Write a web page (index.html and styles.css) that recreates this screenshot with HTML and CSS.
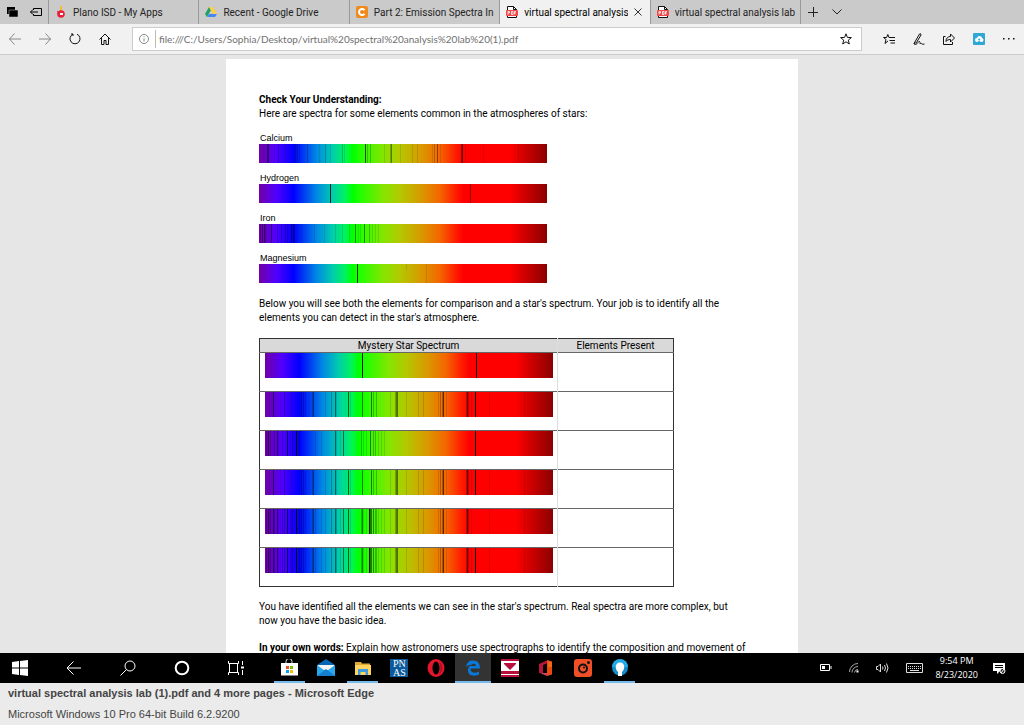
FILE: index.html
```html
<!DOCTYPE html>
<html lang="en">
<head>
<meta charset="utf-8">
<title>virtual spectral analysis lab (1).pdf</title>
<link rel="stylesheet" href="styles.css">
</head>
<body>
<svg class="defs" aria-hidden="true">
  <defs>
    <linearGradient id="rainbow">
      <stop offset="0" stop-color="#7200a4"/><stop offset=".06" stop-color="#5000ff"/><stop offset=".12" stop-color="#0000ff"/>
      <stop offset=".2" stop-color="#0088e4"/><stop offset=".255" stop-color="#00ccae"/><stop offset=".3" stop-color="#00f45c"/>
      <stop offset=".325" stop-color="#00ff00"/><stop offset=".35" stop-color="#20ff00"/><stop offset=".43" stop-color="#84e600"/>
      <stop offset=".49" stop-color="#b4c800"/><stop offset=".57" stop-color="#dc9400"/><stop offset=".63" stop-color="#f46400"/>
      <stop offset=".68" stop-color="#ff2000"/><stop offset=".71" stop-color="#f00"/><stop offset=".87" stop-color="#f00"/>
      <stop offset=".94" stop-color="#c00000"/><stop offset="1" stop-color="#8c0000"/>
    </linearGradient>
    <g id="base"><rect width="288" height="25" fill="url(#rainbow)"/></g>
    <g id="calcium">
      <path class="faint" d="M4.5 0V25M15.5 0V25M26.5 0V25M40.5 0V25M60.5 0V25M71.5 0V25M85.5 0V25M125.5 0V25M141.5 0V25M153.5 0V25M158.5 0V25M173.5 0V25M181.5 0V25M206.5 0V25M224.5 0V25M259.5 0V25"/>
      <path class="soft" d="M19.5 0V25M36.5 0V25M38.5 0V25M48.5 0V25M66.5 0V25M83.5 0V25M108.5 0V25M111.5 0V25M131.5 0V25M175.5 0V25M203.5 0V25"/>
      <path class="mid" d="M8.5 0V25M106.5 0V25M132.5 0V25M178.5 0V25M202.5 0V25"/>
    </g>
    <g id="iron">
      <path class="faint" d="M13.5 0V25M25.5 0V25M50.5 0V25M56.5 0V25M71.5 0V25M75.5 0V25M98.5 0V25M101.5 0V25M113.5 0V25M116.5 0V25M119.5 0V25"/>
      <path class="soft" d="M1.5 0V25M5.5 0V25M9.5 0V25M17.5 0V25M22.5 0V25M27.5 0V25M34.5 0V25M96.5 0V25M108.5 0V25M110.5 0V25"/>
      <path class="mid" d="M3.5 0V25M12.5 0V25M22.5 0V25M78.5 0V25M105.5 0V25"/>
      <path class="dark" d="M31.5 0V25"/>
    </g>
    <g id="mixed">
      <use href="#calcium"/>
      <path class="mid" d="M70.5 0V25M83.5 0V25M97.5 0V25"/>
      <path class="broad" d="M131 0V25M178 0V25M202 0V25M48 0V25"/>
    </g>
    <symbol id="pdf" viewBox="0 0 12 12"><path d="M1.5 11.5V.5h6l3 3v8z" fill="#fff" stroke="#111"/><path d="M7.5.5v3h3" fill="none" stroke="#111"/><rect y="4" width="12" height="6" rx="1" fill="#f04848"/><path d="M2 8.500v-3h1.500v1.500H2M5.500 5.500v3H7v-3zM10 5.500H8.500v3M8.500 7H10" fill="none" stroke="#fff" stroke-width=".8"/></symbol>
  </defs>
</svg>

<header class="tabbar">
  <div class="tab-tools">
    <button aria-label="Tabs set aside"><svg width="12" height="12" viewBox="0 0 12 12"><path d="M1 1h8v7H1z"/><path d="M3 4h9v7H3z" stroke="#cacaca" stroke-width=".5"/></svg></button>
    <button aria-label="Set tabs aside"><svg width="12" height="12" viewBox="0 0 12 12" fill="none" stroke="#000"><path d="M3.500 4V2.500h8v7h-8V8M.500 6H8M3 3.500L.500 6 3 8.500"/></svg></button>
  </div>
  <nav class="tabs">
    <button class="tab"><svg viewBox="0 0 12 12"><path d="M5 0h2v5H5z" fill="#f4bd32"/><circle cx="6" cy="8" r="3.800" fill="#e8203c"/><path d="M2 5l3 1-2 2z" fill="#e8203c"/><path d="M5 7h3v2H5z" fill="#fff"/></svg><span>Plano ISD - My Apps</span></button>
    <button class="tab"><svg viewBox="0 0 12 12"><path d="M4 1L0 8l2 3 4-7z" fill="#1ea362"/><path d="M4 1h4l4 7H8z" fill="#ffcf48"/><path d="M4 8h8l-2 3H2z" fill="#4688f1"/></svg><span>Recent - Google Drive</span></button>
    <button class="tab"><svg viewBox="0 0 12 12"><rect width="12" height="12" rx="2" fill="#f08a1c"/><path d="M8.500 4.300A3 3 0 1 0 8.500 7.700" fill="none" stroke="#fff" stroke-width="2"/></svg><span>Part 2: Emission Spectra In T</span></button>
    <button class="tab active"><svg><use href="#pdf"/></svg><span>virtual spectral analysis</span><svg class="close" viewBox="0 0 8 8"><path d="M.5.5l7 7M7.500.5l-7 7" stroke="#333"/></svg></button>
    <button class="tab"><svg><use href="#pdf"/></svg><span>virtual spectral analysis lab (</span></button>
  </nav>
  <button class="tab-extra" aria-label="New tab"><svg width="10" height="10"><path d="M5.500 0v10M0 5.500h10" stroke="#222"/></svg></button>
  <button class="tab-extra" aria-label="Tab previews"><svg width="10" height="6"><path d="M.5.5L5 5 9.500.5" fill="none" stroke="#222"/></svg></button>
</header>

<div class="toolbar">
  <button aria-label="Back" class="dim"><svg width="12" height="12"><path d="M0 6h12M5.500.5L.5 6l5 5.500"/></svg></button>
  <button aria-label="Forward" class="dim"><svg width="12" height="12"><path d="M0 6h12M6.500.5l5 5.500-5 5.500"/></svg></button>
  <button aria-label="Refresh"><svg width="12" height="12"><path d="M4 1.200A5 5 0 1 0 8 1.200M4 3V1H2"/></svg></button>
  <button aria-label="Home"><svg width="12" height="12"><path d="M.5 6.500L6 1l5.500 5.500M2.500 5v6.500h2.500V7.500h2v4h2.500V5"/></svg></button>
  <div class="address">
    <svg class="info" width="10" height="10"><circle cx="5" cy="5" r="4.500"/><path d="M5 4.500v3M5 2.500v1"/></svg>
    <input aria-label="Address" value="file:///C:/Users/Sophia/Desktop/virtual%20spectral%20analysis%20lab%20(1).pdf">
    <button aria-label="Add to favorites"><svg width="12" height="12"><path d="M6 .8l1.400 3.600 4 .2-3.100 2.500 1 3.900L6 8.800 2.700 11l1-3.900L.6 4.600l4-.2z"/></svg></button>
  </div>
  <div class="actions">
    <button aria-label="Hub"><svg width="12" height="12"><path d="M7 4.500H6L4.800 1.500 3.600 4.500H.5L3 6.500 2 10.500 5 8M6.500 4.500H12M6.500 7.500H12M7.500 10H12"/></svg></button>
    <button aria-label="Add notes"><svg width="12" height="12"><path d="M1 10.500L6.500 1q1.500-1 1.500 1L3.500 9.500 1 10.500q0 1 1.500 1C5 11 5 8 6.500 8.500S6 11 7.500 10.500s1 1.500 4 .5"/></svg></button>
    <button aria-label="Share"><svg width="12" height="12"><path d="M2.500 3.500h-2v8h9V9M3 8.500C3 5 5 3.500 7.500 3.500v-2.500l4 4-4 4V6.500C5.500 6.500 4 7 3 8.500z"/></svg></button>
    <button aria-label="Cloud extension"><svg class="solid" width="12" height="12"><rect width="12" height="12" rx="1" fill="#2fa8d5"/><circle cx="4" cy="7" r="2" fill="#fff"/><circle cx="6.500" cy="5.500" r="2.500" fill="#fff"/><circle cx="8.500" cy="7" r="2" fill="#fff"/><circle cx="6.200" cy="6.500" r="1" fill="#2fa8d5"/></svg></button>
    <button aria-label="More"><svg class="solid" width="12" height="4"><path d="M0 1h1.500v1.500H0zM5 1h1.500v1.500H5zM10 1h1.500v1.500H10z" fill="#111"/></svg></button>
  </div>
</div>

<main class="viewer">
  <article class="page">
    <h1>Check Your Understanding:</h1>
    <p>Here are spectra for some elements common in the atmospheres of stars:</p>
    <div class="elements">
      <figure><figcaption>Calcium</figcaption><svg class="spectrum" viewBox="0 0 288 25" preserveAspectRatio="none"><use href="#base"/><use href="#calcium"/><path class="mid" d="M9.500 0V25M106.500 0V25M203.500 0V25"/></svg></figure>
      <figure><figcaption>Hydrogen</figcaption><svg class="spectrum" viewBox="0 0 288 25" preserveAspectRatio="none"><use href="#base"/><path class="dark" d="M71.500 0V25"/><path class="mid" d="M211.500 0V25"/></svg></figure>
      <figure><figcaption>Iron</figcaption><svg class="spectrum" viewBox="0 0 288 25" preserveAspectRatio="none"><use href="#base"/><path class="faint" d="M38.500 0V25M42.500 0V25M55.500 0V25M65.500 0V25M76.500 0V25M83.500 0V25M90.500 0V25M99.500 0V25M101.500 0V25M113.500 0V25M116.500 0V25M119.500 0V25"/><path class="soft" d="M1.500 0V25M6.500 0V25M18.500 0V25M22.500 0V25M26.500 0V25M28.500 0V25M35.500 0V25M110.500 0V25"/><path class="mid" d="M3.500 0V25M5.500 0V25M12.500 0V25M32.500 0V25M34.500 0V25M96.500 0V25M105.500 0V25"/></svg></figure>
      <figure><figcaption>Magnesium</figcaption><svg class="spectrum" viewBox="0 0 288 25" preserveAspectRatio="none"><use href="#base"/><path class="dark" d="M98.500 0V25"/><path class="faint" d="M147.500 0V8M167.500 0V25"/></svg></figure>
    </div>
    <p>Below you will see both the elements for comparison and a star's spectrum. Your job is to identify all the elements you can detect in the star's atmosphere.</p>
    <table>
      <thead><tr><th class="star" scope="col">Mystery Star Spectrum</th><th scope="col">Elements Present</th></tr></thead>
      <tbody>
        <tr><td><svg class="spectrum" viewBox="0 0 288 25" preserveAspectRatio="none"><use href="#base"/><path class="dark" d="M97.500 0V25M211.500 0V25"/></svg></td><td></td></tr>
        <tr><td><svg class="spectrum" viewBox="0 0 288 25" preserveAspectRatio="none"><use href="#base"/><use href="#mixed"/><path class="dark" d="M210.500 0V25"/></svg></td><td></td></tr>
        <tr><td><svg class="spectrum" viewBox="0 0 288 25" preserveAspectRatio="none"><use href="#base"/><use href="#iron"/><path class="mid" d="M70.500 0V25"/><path class="dark" d="M210.500 0V25"/></svg></td><td></td></tr>
        <tr><td><svg class="spectrum" viewBox="0 0 288 25" preserveAspectRatio="none"><use href="#base"/><use href="#mixed"/><path class="dark" d="M210.500 0V25"/></svg></td><td></td></tr>
        <tr><td><svg class="spectrum" viewBox="0 0 288 25" preserveAspectRatio="none"><use href="#base"/><use href="#mixed"/><use href="#iron"/><path class="dark" d="M104.500 0V25"/></svg></td><td></td></tr>
        <tr><td><svg class="spectrum" viewBox="0 0 288 25" preserveAspectRatio="none"><use href="#base"/><use href="#mixed"/><use href="#iron"/><path class="dark" d="M104.500 0V25M210.500 0V25"/></svg></td><td></td></tr>
      </tbody>
    </table>
    <p>You have identified all the elements we can see in the star's spectrum. Real spectra are more complex, but now you have the basic idea.</p>
    <p class="prompt"><b>In your own words:</b> Explain how astronomers use spectrographs to identify the composition and movement of</p>
  </article>
</main>

<div class="taskbar">
  <div class="system">
    <button aria-label="Start"><svg width="16" height="16" fill="#fff"><path d="M0 2l7-1v6.500H0zM8 1l8-1v7.500H8zM0 8.500h7V15l-7-1zM8 8.500h8V16l-8-1z"/></svg></button>
    <button aria-label="Back"><svg width="16" height="14" fill="none" stroke="#fff"><path d="M1 7h14M7.500 .5L1 7l6.500 6.500"/></svg></button>
    <button aria-label="Search"><svg width="16" height="16" fill="none" stroke="#fff"><circle cx="10" cy="6" r="5"/><path d="M6.500 9.500L.5 15.500"/></svg></button>
    <button aria-label="Cortana"><svg width="16" height="16" fill="none" stroke="#fff" stroke-width="2"><circle cx="8" cy="8" r="6.300"/></svg></button>
    <button aria-label="Task view"><svg width="16" height="16" fill="none" stroke="#fff"><path d="M.5 1v2.500h10V1M.5 15v-2.500h10V15M1.500 4v8M9.500 4v8M14.500 1v4M14.500 10v5"/><path d="M13 7.500h3" stroke-width="2"/></svg></button>
  </div>
  <div class="apps">
    <button class="running" aria-label="Store"><svg width="18" height="18"><path d="M6 5V2.500a3 3 0 0 1 6 0V5" fill="none" stroke="#ddd"/><path d="M1 4h17v12.500H1z" fill="#fff"/><path d="M6 7h3v3H6z" fill="#f04f23"/><path d="M10 7h3v3h-3z" fill="#7db900"/><path d="M6 11h3v3H6z" fill="#00a3ee"/><path d="M10 11h3v3h-3z" fill="#ffb800"/></svg></button>
    <button aria-label="Mail"><svg width="18" height="18"><path d="M0 6l9-6 9 6v11H0z" fill="#0866b7"/><path d="M1 6h16v5H1z" fill="#f5f5f5"/><path d="M0 6l9 6.500L18 6v11H0z" fill="#28a8ea"/><path d="M0 17l9-7 9 7z" fill="#1580d0"/></svg></button>
    <button class="running" aria-label="File Explorer"><svg width="18" height="16"><path d="M1 2h6l1 1.500h8V15H1z" fill="#dfa831"/><path d="M1 5h16v10H1z" fill="#ffd35c"/><path d="M4 9h10v6h-2.500v-3h-5v3H4z" fill="#3f9ae0"/></svg></button>
    <button aria-label="PNAS" class="pnas"><span>PN<br>AS</span></button>
    <button aria-label="Opera"><svg width="18" height="18"><path fill-rule="evenodd" d="M9 0a8.500 9 0 1 0 0 18A8.500 9 0 1 0 9 0zM9 2.500c2 0 3.500 3 3.500 6.500S11 15.500 9 15.500 5.500 12.500 5.500 9 7 2.500 9 2.500z" fill="#e5152b"/><path d="M12 2.500c2 4 2 9 0 13 4-2 5-10 0-13z" fill="#a80f20"/></svg></button>
    <button class="running current" aria-label="Microsoft Edge"><svg width="16" height="18"><path d="M1 8C2 2.500 5 1.500 8 1.500c5 0 7 3.500 7 8H5.500c0 5 5 5 8.500 3v3c-4 2-11 2-11-4.500C3 8.500 4.500 6.500 7 5.500 4.500 5.500 2.500 6.500 1 8zm4.600-1H11c0-3-5-3-5.400 0z" fill="#0a78d7"/></svg></button>
    <button aria-label="Reader"><svg width="18" height="18"><path d="M0 0h18v18H0z" fill="#fff"/><path d="M0 0h18v2H0zM3 4h12v1l-6 6-6-6zM0 12h18v3H0zM0 16h18v2H0z" fill="#b8103c"/></svg></button>
    <button aria-label="Office"><svg width="14" height="18"><path d="M0 5l9-4v3L4 6v8H0z" fill="#b6163c"/><path d="M8 1l5 1.500v13L8 17z" fill="#e84a10"/><path d="M1 14h7v3z" fill="#d44068"/><path d="M9 2l4 1v5H9z" fill="#f06a14"/></svg></button>
    <button aria-label="Camera"><svg width="18" height="18"><rect width="18" height="18" rx="3" fill="#f05028"/><circle cx="9" cy="9.500" r="4" fill="none" stroke="#111" stroke-width="2"/><circle cx="14.500" cy="3.500" r="1.500" fill="#111"/><circle cx="10" cy="8.500" r="1" fill="#111"/></svg></button>
    <button class="running" aria-label="Tips"><svg width="18" height="18"><circle cx="9" cy="8.500" r="8" fill="#148cc8"/><path d="M1 8a8 8 0 0 1 16 0z" fill="#24aae4"/><path d="M7 17v-4C3.500 10 4 3.500 9 3.500s5.500 6.500 2 9.500v4z" fill="#fff"/></svg></button>
  </div>
  <div class="tray">
    <div class="status">
      <svg width="12" height="8"><path d="M.5.5h9v6h-9zM11 2v3" fill="none" stroke="#fff"/><path d="M2 2h3v3H2z" fill="#fff"/></svg>
      <svg width="10" height="10" fill="none" stroke="#aaa"><path d="M.5 9A8.500 8.500 0 0 1 9 .5M3 9.500A6 6 0 0 1 9 3.500M5.500 9.500A3.500 3.500 0 0 1 9 6.500"/><path d="M7.500 8.500h2" stroke="#fff" stroke-width="2"/></svg>
      <svg width="13" height="10" fill="none" stroke="#ddd"><path d="M.5 3.500H2L4.500 1v8L2 6.500H.5zM6.500 3.500q1 1.500 0 3M8.500 2q2 3 0 6M10.500.5q3 4.500 0 9"/></svg>
      <svg width="17" height="11" fill="none" stroke="#ddd"><path d="M.5.5h16v9H.5z"/><path d="M2 3.500h13M2 5.500h13" stroke-dasharray="1 1"/><path d="M4 7.500h9"/></svg>
    </div>
    <time datetime="2020-08-23T21:54">9:54 PM<br>8/23/2020</time>
    <svg width="13" height="13"><path d="M0 1h12v8H7l-3 3V9H0z" fill="#fff"/><path d="M2 3.500h8M2 5.500h8" stroke="#000"/><circle cx="9.500" cy="9" r="2.500" fill="#222" stroke="#fff"/><path d="M8 11l3-4" stroke="#fff"/></svg>
  </div>
</div>

<footer>
  <p><b>virtual spectral analysis lab (1).pdf and 4 more pages - Microsoft Edge</b></p>
  <p>Microsoft Windows 10 Pro 64-bit Build 6.2.9200</p>
</footer>
</body>
</html>
```
FILE: styles.css
```css
* { box-sizing: border-box; }
body { margin: 0; height: 100vh; display: flex; flex-direction: column; overflow: hidden; background: #e6e6e6; font-family: Roboto, "Open Sans", sans-serif; font-size: 10px; color: #222; }
button { display: flex; align-items: center; justify-content: center; border: 0; padding: 0; background: none; font: inherit; color: inherit; }
p, h1, figure { margin: 0; }
svg { display: block; flex: none; }
.defs { position: absolute; width: 0; height: 0; }

.tabbar { flex: none; display: flex; height: 24px; background: #cacaca; }
.tab-tools { flex: none; width: 48px; display: flex; align-items: center; justify-content: space-between; padding: 0 6px; }
.tabs { flex: 0 1 753px; min-width: 0; display: flex; border-right: 1px solid #999; }
.tab { flex: 1 1 0; min-width: 0; gap: 6px; padding: 0 4px 0 6px; justify-content: flex-start; border-left: 1px solid #999; }
.tab svg { width: 12px; height: 12px; }
.tab span { flex: 1; min-width: 0; overflow: hidden; white-space: nowrap; text-align: left; }
.tab .close { width: 8px; height: 8px; margin-right: 4px; }
.tab.active { background: #f1f1f1; color: #000; }
.tab-extra { width: 24px; }

.toolbar { flex: none; display: flex; align-items: center; height: 31px; background: #f1f1f1; border-bottom: 1px solid #ccc; }
.toolbar button { width: 30px; height: 24px; flex: none; }
.toolbar svg { fill: none; stroke: #111; }
.toolbar .dim svg, .toolbar .info { stroke: #888; }
.toolbar .solid { stroke: none; }
.address { flex: 1; min-width: 0; margin-left: 12px; height: 24px; display: flex; align-items: center; gap: 6px; padding-left: 6px; background: #fff; border: 1px solid #ccc; }
.address input { flex: 1; min-width: 0; height: 18px; border: 0; border-left: 1px solid #bbb; padding: 0 0 0 3px; outline: 0; background: none; font: 10px Lato, sans-serif; color: #707070; }
.actions { display: flex; margin-left: 12px; }

.viewer { flex: 1; min-height: 0; overflow: hidden; padding: 4px 16px 0; }
.page { max-width: 572px; margin: 0 auto; min-height: 100%; padding: 34px 33px; background: #fff; color: #000; font-size: 10px; line-height: 14px; }
.page h1 { font-size: 10px; font-weight: bold; }
.page p { max-width: 486px; }
.elements { display: grid; gap: 9px; width: 288px; margin: 11px 0 14px; }
figcaption { font-family: "Liberation Sans", Arial, sans-serif; font-size: 9px; line-height: 12px; padding-left: 1px; }
.spectrum { width: 288px; height: 19px; }
.faint, .soft, .mid, .dark, .broad { fill: none; stroke: #000; }
.faint { stroke-opacity: .12; }
.soft { stroke-opacity: .25; }
.mid { stroke-opacity: .5; }
.dark { stroke-opacity: .95; }
.broad { stroke-opacity: .25; stroke-width: 2px; }
table { width: 415px; margin: 13px 0; border-collapse: collapse; border: 1px solid #333; table-layout: fixed; }
th { height: 14px; padding: 0; line-height: 13px; font-weight: normal; background: #d9d9d9; }
.star { width: 298px; }
td { height: 39px; padding: 0 4px 0 5px; vertical-align: top; border-top: 1px solid #666; }
th + th, td + td { border-left: 1px solid #ddd; }
td .spectrum { height: 25px; }
.prompt { margin-top: 13px; white-space: nowrap; }

.taskbar { flex: none; height: 30px; display: flex; background: #000; color: #fff; }
.system { display: flex; gap: 30px; padding: 0 23px 0 8px; }
.system button { width: 24px; }
.apps { flex: 0 1 367px; display: flex; }
.apps button { flex: 1; min-width: 0; position: relative; }
.apps .current { background: #333; }
.running::after { content: ""; position: absolute; left: 3px; right: 3px; bottom: 0; height: 2px; background: #76b9ed; }
.current::after { left: 0; right: 0; }
.pnas span { width: 18px; height: 18px; background: #0c5a9c; color: #fff; font: 10px/9px "Liberation Serif", serif; overflow: hidden; }
.tray { margin-left: auto; padding-right: 18px; display: flex; align-items: center; gap: 12px; }
.status { display: flex; align-items: center; gap: 17px; }
.tray time { padding-right: 3px; font-family: "Open Sans", sans-serif; font-size: 9px; line-height: 14px; text-align: center; white-space: nowrap; }

footer { flex: none; height: 42px; padding-left: 8px; background: #ebebeb; color: #444; font: 11px/21px "Liberation Sans", Arial, sans-serif; }
```
